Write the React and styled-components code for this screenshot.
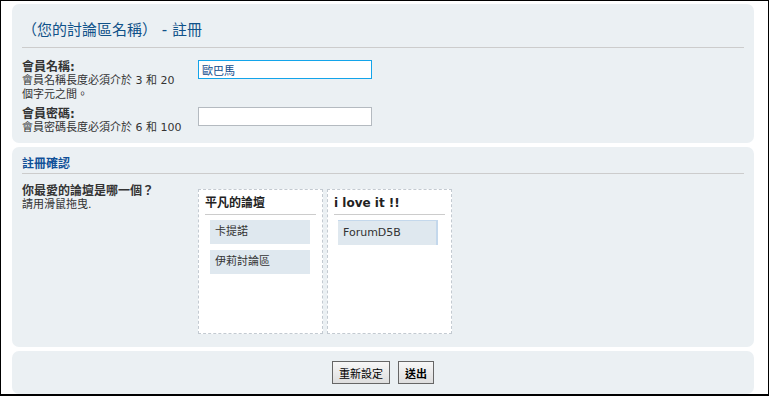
import styled, { createGlobalStyle } from 'styled-components';

const GlobalStyle = createGlobalStyle`
  body {
    margin: 0;
    background: #fff;
    font-family: "DejaVu Sans", "Noto Sans CJK TC", sans-serif;
    font-size: 11px;
    color: #333;
  }
`;

const Frame = styled.div`
  box-sizing: border-box;
  width: 769px;
  height: 396px;
  border: 1px solid #000;
  border-bottom-width: 2px;
  padding: 3px 14px 0 11px;
  display: flex;
  flex-direction: column;
  gap: 4px;
  overflow: hidden;
`;

const Panel = styled.div`
  background: #ebf0f3;
  border-radius: 7px;
  padding: ${p => p.pad || '0 10px'};
  flex-shrink: 0;
`;

const Title = styled.h2`
  margin: 0;
  padding: 17px 0 8px;
  font-size: 15px;
  line-height: 18px;
  font-weight: normal;
  color: #105289;
  border-bottom: 1px solid #ccc;
`;

const SubTitle = styled.h3`
  margin: 0;
  padding: 9px 0 1px;
  font-size: 12px;
  line-height: 16px;
  font-weight: bold;
  color: #115098;
  border-bottom: 1px solid #ccc;
`;

const Fields = styled.div`
  display: flex;
  flex-direction: column;
  gap: 5px;
  padding: ${p => p.pad};
`;

const Row = styled.div`
  display: flex;
  align-items: flex-start;
`;

const Label = styled.div`
  box-sizing: border-box;
  flex: 0 0 176px;
  padding-right: 12px;
  line-height: 14px;
`;

const LabelName = styled.div`
  font-size: 12px;
  font-weight: bold;
  color: #333;
`;

const Hint = styled.div`
  font-size: 11px;
  color: #333;
`;

const Input = styled.input`
  box-sizing: border-box;
  width: 174px;
  height: 19px;
  margin: 0;
  padding: 0 3px;
  border: 1px solid ${p => (p.focused ? '#13a4ea' : '#b4bac0')};
  background: #fff;
  outline: none;
  font-family: "DejaVu Sans", "Noto Sans CJK TC", sans-serif;
  font-size: 11px;
  color: #0f4b8c;
`;

const Boxes = styled.div`
  display: flex;
  gap: 4px;
  margin-top: 5px;
`;

const Box = styled.div`
  box-sizing: border-box;
  width: 125px;
  height: 145px;
  border: 1px dashed #c3cad1;
  background: #fff;
  padding: 0 6px;
`;

const BoxHead = styled.div`
  padding: 5px 0 3px;
  line-height: 16px;
  font-size: 12px;
  font-weight: bold;
  color: #222;
  border-bottom: 1px solid #ccc;
  margin-bottom: 5px;
`;

const Item = styled.div`
  box-sizing: border-box;
  width: 100px;
  height: ${p => (p.dragging ? '25px' : '24px')};
  line-height: ${p => (p.dragging ? '24px' : '24px')};
  margin: 0 0 6px ${p => (p.dragging ? '4px' : '5px')};
  padding-left: 5px;
  background: #dfe8ef;
  font-size: 11px;
  color: #333;
  ${p => p.dragging && `
    border-top: 1px solid #c4d8ec;
    border-right: 2px solid #c4d8ec;
  `}
`;

const Actions = styled.div`
  display: flex;
  justify-content: center;
  gap: 8px;
`;

const Button = styled.button`
  box-sizing: border-box;
  height: 23px;
  margin: 0;
  padding: 0 6px;
  border: 1px solid #666;
  background: linear-gradient(#f7f7f7, #dedede);
  font-family: "DejaVu Sans", "Noto Sans CJK TC", sans-serif;
  font-size: 11px;
  font-weight: ${p => (p.primary ? 'bold' : 'normal')};
  color: #000;
`;

const forums = [
  { title: '平凡的論壇', items: ['卡提諾', '伊莉討論區'] },
  { title: 'i love it !!', items: ['ForumD5B'], dragging: true },
];

export default function App() {
  return (
    <>
      <GlobalStyle />
      <Frame>
        <Panel>
          <Title>（您的討論區名稱） - 註冊</Title>
          <Fields pad="12px 0 8px">
            <Row>
              <Label>
                <LabelName>會員名稱:</LabelName>
                <Hint>會員名稱長度必須介於 3 和 20 個字元之間。</Hint>
              </Label>
              <Input focused defaultValue="歐巴馬" />
            </Row>
            <Row>
              <Label>
                <LabelName>會員密碼:</LabelName>
                <Hint>會員密碼長度必須介於 6 和 100</Hint>
              </Label>
              <Input type="password" />
            </Row>
          </Fields>
        </Panel>

        <Panel>
          <SubTitle>註冊確認</SubTitle>
          <Fields pad="10px 0 13px">
            <Row>
              <Label>
                <LabelName>你最愛的論壇是哪一個？</LabelName>
                <Hint>請用滑鼠拖曳.</Hint>
              </Label>
              <Boxes>
                {forums.map(f => (
                  <Box key={f.title}>
                    <BoxHead>{f.title}</BoxHead>
                    {f.items.map(it => (
                      <Item key={it} dragging={f.dragging}>{it}</Item>
                    ))}
                  </Box>
                ))}
              </Boxes>
            </Row>
          </Fields>
        </Panel>

        <Panel pad="10px 10px">
          <Actions>
            <Button>重新設定</Button>
            <Button primary>送出</Button>
          </Actions>
        </Panel>
      </Frame>
    </>
  );
}
